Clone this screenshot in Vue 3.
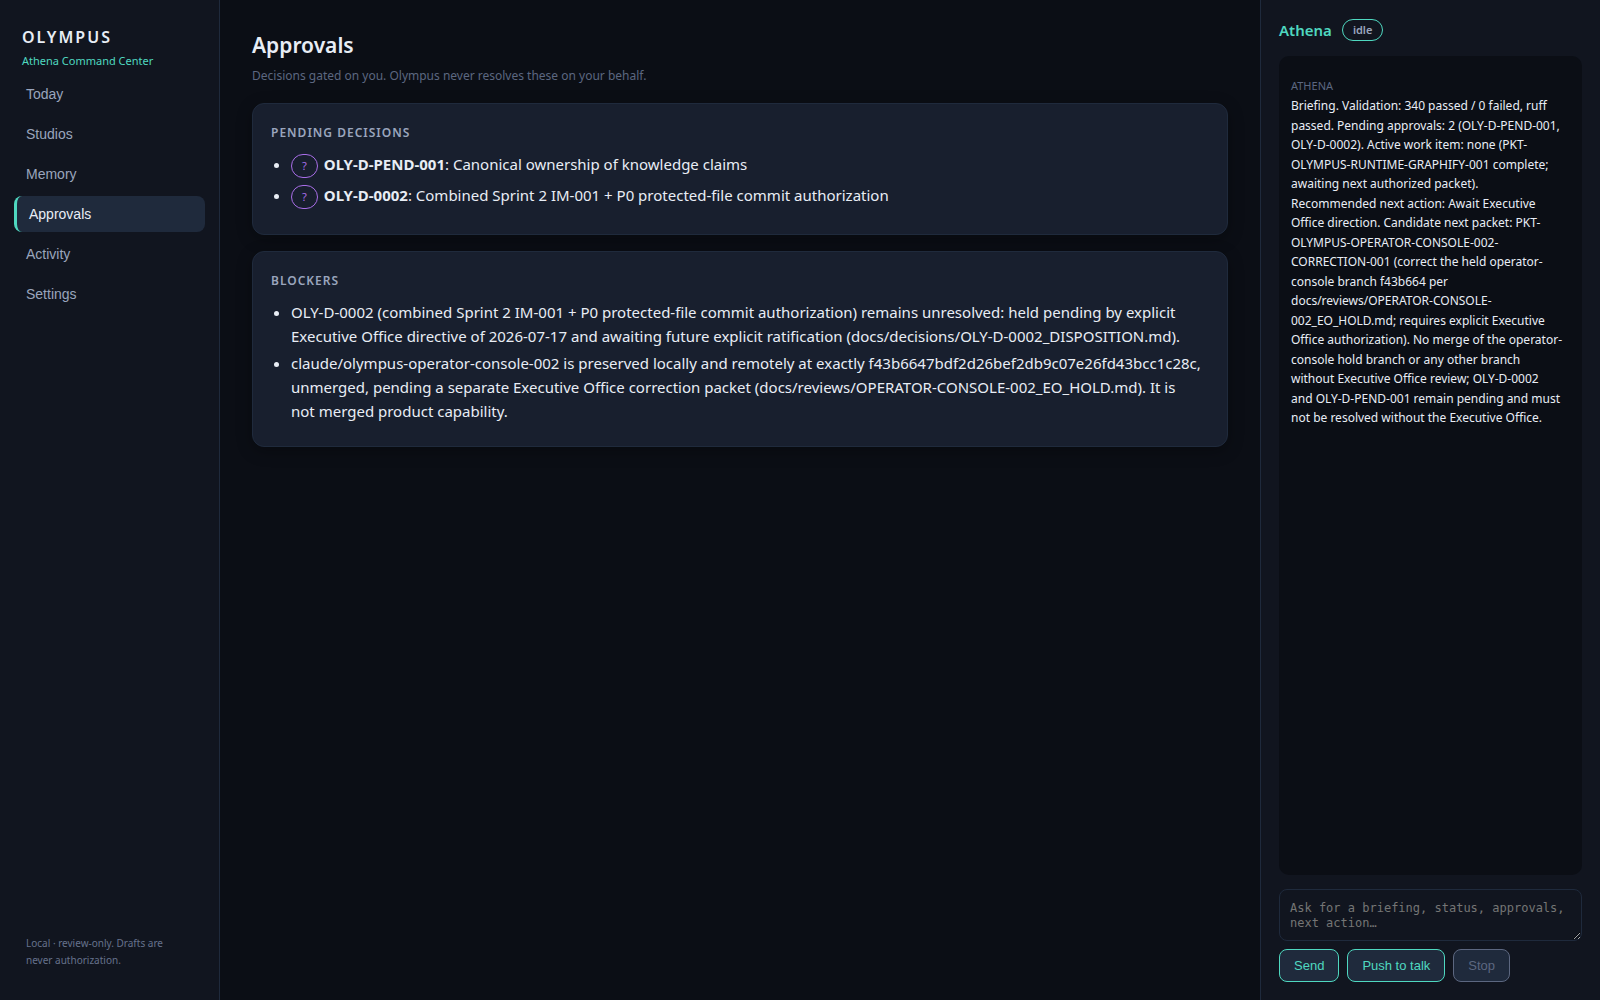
<script setup>
import { ref } from 'vue'

const navItems = ['Today', 'Studios', 'Memory', 'Approvals', 'Activity', 'Settings']
const active = ref('Approvals')
const draft = ref('')

const decisions = [
  { id: 'OLY-D-PEND-001', text: 'Canonical ownership of knowledge claims' },
  { id: 'OLY-D-0002', text: 'Combined Sprint 2 IM-001 + P0 protected-file commit authorization' },
]

const blockers = [
  'OLY-D-0002 (combined Sprint 2 IM-001 + P0 protected-file commit authorization) remains unresolved: held pending by explicit Executive Office directive of 2026-07-17 and awaiting future explicit ratification (docs/decisions/OLY-D-0002_DISPOSITION.md).',
  'claude/olympus-operator-console-002 is preserved locally and remotely at exactly f43b6647bdf2d26bef2db9c07e26fd43bcc1c28c, unmerged, pending a separate Executive Office correction packet (docs/reviews/OPERATOR-CONSOLE-002_EO_HOLD.md). It is not\u00a0merged product capability.',
]

const briefing =
  'Briefing. Validation: 340 passed / 0 failed, ruff passed. Pending approvals: 2 (OLY-D-PEND-001, OLY-D-0002). Active work item: none (PKT-OLYMPUS-RUNTIME-GRAPHIFY-001 complete; awaiting next authorized packet).\nRecommended next action: Await Executive Office direction. Candidate next packet: PKT-OLYMPUS-OPERATOR-CONSOLE-002-CORRECTION-001 (correct the held operator-console branch f43b664 per docs/reviews/OPERATOR-CONSOLE-002_EO_HOLD.md; requires explicit Executive Office authorization). No merge of the operator-console hold branch or any other branch without\u00a0Executive Office review; OLY-D-0002 and\u00a0OLY-D-PEND-001 remain pending and must not be resolved without the Executive Office.'
</script>

<template>
  <div class="shell">
    <aside class="sidebar">
      <div class="brand">
        <div class="brand-name">OLYMPUS</div>
        <div class="brand-sub">Athena Command Center</div>
      </div>
      <nav class="nav" aria-label="Primary">
        <button
          v-for="item in navItems"
          :key="item"
          type="button"
          class="nav-item"
          :class="{ active: item === active }"
          @click="active = item"
        >{{ item }}</button>
      </nav>
      <p class="side-note">Local · review-only. Drafts are never authorization.</p>
    </aside>

    <main class="main">
      <h1 class="title">Approvals</h1>
      <p class="subtitle">Decisions gated on you. Olympus never resolves these on your behalf.</p>

      <section class="card">
        <h2 class="card-title">Pending decisions</h2>
        <ul class="list">
          <li v-for="d in decisions" :key="d.id" class="decision">
            <span class="pill">?</span>
            <span><strong>{{ d.id }}</strong>: {{ d.text }}</span>
          </li>
        </ul>
      </section>

      <section class="card">
        <h2 class="card-title">Blockers</h2>
        <ul class="list">
          <li v-for="b in blockers" :key="b">{{ b }}</li>
        </ul>
      </section>
    </main>

    <aside class="panel">
      <header class="panel-head">
        <span class="panel-name">Athena</span>
        <span class="state">idle</span>
      </header>
      <div class="log">
        <div class="who">Athena</div>
        <div class="message">{{ briefing }}</div>
      </div>
      <form class="composer" @submit.prevent>
        <textarea
          v-model="draft"
          class="prompt"
          rows="2"
          aria-label="Message to Athena"
          placeholder="Ask for a briefing, status, approvals, next action…"
        ></textarea>
        <div class="actions">
          <button type="submit" class="btn">Send</button>
          <button type="button" class="btn">Push to talk</button>
          <button type="button" class="btn" disabled>Stop</button>
        </div>
      </form>
    </aside>
  </div>
</template>

<style>
body {
  margin: 0;
  background: #0b0e15;
}
</style>

<style scoped>
.shell {
  display: grid;
  grid-template-columns: 220px minmax(0, 1fr) 340px;
  height: 100vh;
  background: #0b0e15;
  color: #e8edf5;
  font-family: "Segoe UI", "Noto Sans", "Open Sans", sans-serif;
  font-size: 15px;
  line-height: 24px;
}

.shell * {
  box-sizing: border-box;
}

.sidebar {
  display: flex;
  flex-direction: column;
  padding: 25px 14px 24px;
  background: #11151f;
  border-right: 1px solid #1f2a3c;
}

.brand {
  padding: 0 8px;
  margin-bottom: 3px;
}

.brand-name {
  font-size: 16px;
  font-weight: 600;
  letter-spacing: 2px;
}

.brand-sub {
  color: #4fd8c0;
  font-size: 11px;
}

.nav {
  display: flex;
  flex-direction: column;
  gap: 4px;
}

.nav-item {
  height: 36px;
  padding: 0 12px;
  border: 0;
  border-radius: 8px;
  background: none;
  color: #9aa5bd;
  font: 14px "Liberation Sans", Arial, sans-serif;
  text-align: left;
  cursor: pointer;
}

.nav-item.active {
  border-left: 3px solid #4fd8c0;
  background: #1f2a3c;
  color: #e8edf5;
}

.side-note {
  margin: auto 0 0;
  padding: 0 24px 7px 12px;
  color: #66728c;
  font-size: 10px;
  line-height: 17px;
}

.main {
  padding: 28px 32px;
  overflow: auto;
}

.title {
  margin: 0;
  font-size: 21px;
  font-weight: 600;
  line-height: 34px;
}

.subtitle {
  margin: 4px 0 18px;
  color: #5c6780;
  font-size: 12px;
  line-height: 19px;
}

.card {
  margin-bottom: 16px;
  padding: 18px 18px 23px;
  border: 1px solid #1f2a3c;
  border-radius: 12px;
  background: #181f2e;
  box-shadow: 0 4px 16px rgba(0, 0, 0, 0.3);
}

.card-title {
  margin: 0 0 8px;
  color: #9aa5bd;
  font-size: 12px;
  font-weight: 600;
  line-height: 22px;
  letter-spacing: 1px;
  text-transform: uppercase;
}

.list {
  margin: 0;
  padding-left: 20px;
}

.list li + li {
  margin-top: 3px;
}

.decision {
  height: 28px;
}

.pill {
  display: inline-block;
  padding: 0 10px;
  margin-right: 2px;
  border: 1px solid #a96ee8;
  border-radius: 12px;
  color: #a96ee8;
  font-size: 11px;
  line-height: 22px;
  margin-right: 6px;
}

.panel {
  display: flex;
  flex-direction: column;
  gap: 14px;
  min-height: 0;
  padding: 18px;
  background: #11151f;
  border-left: 1px solid #1f2a3c;
}

.panel-head {
  display: flex;
  align-items: center;
  gap: 10px;
}

.panel-name {
  color: #4fd8c0;
  font-weight: 600;
}

.state {
  padding: 0 10px;
  border: 1px solid #4fd8c0;
  border-radius: 11px;
  color: #9aa5bd;
  font-size: 11px;
  font-weight: 600;
  line-height: 20px;
}

.log {
  flex: 1;
  min-height: 0;
  padding: 20px 12px 12px;
  border-radius: 10px;
  background: #0b0e15;
  overflow: auto;
}

.who {
  color: #5c6780;
  font-size: 11px;
  line-height: 20px;
  text-transform: uppercase;
}

.message {
  font-size: 12px;
  line-height: 1.625;
  white-space: pre-line;
}

.composer {
  display: flex;
  flex-direction: column;
  gap: 8px;
}

.prompt {
  display: block;
  width: 100%;
  height: 52px;
  padding: 11px 10px 9px;
  border: 1px solid #1f2a3c;
  border-radius: 8px;
  background: #11151f;
  color: #e8edf5;
  font: 12px/15px "DejaVu Sans Mono", monospace;
  resize: vertical;
  overflow: auto;
}

.prompt::placeholder {
  color: #757575;
}

.actions {
  display: flex;
  gap: 8px;
}

.btn {
  height: 33px;
  padding: 0 14px;
  border: 1px solid #4fd8c0;
  border-radius: 8px;
  background: #1f2a3c;
  color: #4fd8c0;
  font: 13px "Liberation Sans", Arial, sans-serif;
  cursor: pointer;
}

.btn:disabled {
  border-color: #5c6780;
  color: #5c6780;
  cursor: default;
}
</style>
